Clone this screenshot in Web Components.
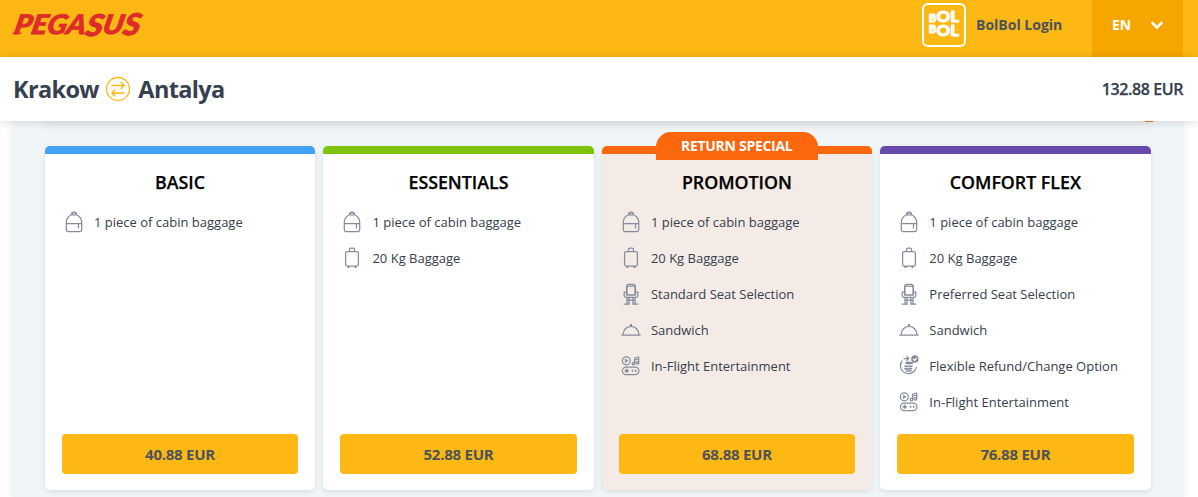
<!DOCTYPE html>
<html lang="en">
<head>
<meta charset="utf-8">
<title>Pegasus</title>
<style>
html,body{margin:0;height:497px;overflow:hidden;background:#fff}
body{font-family:"Open Sans","Noto Sans",sans-serif;color:#36404e}
</style>
</head>
<body>
<fare-page></fare-page>
<script>
class Base extends HTMLElement{
  constructor(){super();this.attachShadow({mode:'open'});}
  connectedCallback(){this.shadowRoot.innerHTML=this.render();}
}
const ICONS={
cabin:'<path d="M4.300 12.500C4.300 8.500 6.500 6.200 9.500 4.800H14.500C17.500 6.200 19.700 8.500 19.700 12.500V19.800Q19.700 21.500 18 21.500H6Q4.300 21.500 4.300 19.800Z M4.300 13.700H19.700M16.500 14V18.500"/><path d="M9.700 4.500Q9.800 2.400 12 2.400T14.300 4.500" stroke-width="1.800"/>',
bag:'<rect x="5.600" y="5.500" width="12.800" height="14.500" rx="1.500"/><path d="M9.500 5.500V3.300Q9.500 2 11 2H13Q14.500 2 14.500 3.300V5.500"/><path d="M7.500 21H9.500M14.500 21H16.500" stroke-width="1.800"/>',
seat:'<path d="M7.800 13V4.700Q8 2.600 9.500 2.500H14.500Q16 2.600 16.200 4.700V13Z" stroke-width="1.600"/><path d="M8 4.300H16" stroke-width="1"/><path d="M4.800 10.200H7M17 10.200H19.200M5.200 10V13.500Q5.300 15.300 7 15.300H17Q18.700 15.300 18.800 13.500V10M8 16V21.500M10 16V21.500M14 16V21.500M16 16V21.500M8 18H16M4.700 22H10.800M13.200 22H19.300"/>',
food:'<path d="M2.300 17.200H21.700M4.200 16.500C4.200 12 7.500 8.300 12 8.300S19.800 12 19.800 16.500"/><path d="M11 7H13" stroke-width="2"/>',
play:'<circle cx="7.300" cy="6.800" r="4"/><path d="M6.200 4.900V8.700L9.200 6.800Z" fill="currentColor" stroke-width=".5"/><path d="M15.700 9.500V4L19.700 3V8.500M15.700 6L19.700 5"/><circle cx="14.500" cy="9.600" r="1.300"/><circle cx="18.500" cy="8.800" r="1.300"/><rect x="3.400" y="13" width="16.500" height="7.700" rx="3.850"/><path d="M7.700 14.800V18.800M5.700 16.800H9.700" stroke-width="1.700"/><path d="M12.800 16.800H14.300M15.900 16.800H17.400" stroke-width="1.900"/>',
refund:'<path d="M5.500 6.700C4.100 8 3.400 9.700 3.400 11.700C3.400 16.200 7 19.700 11.500 19.700C15.500 19.700 18.800 16.800 19.400 13M6.500 4.500H11.500M9.500 2.300L11.700 4.500L9.500 6.700"/><path d="M8.500 9Q12 7.600 15.500 9Q12 10.400 8.500 9M7.500 12Q11.500 13 15.700 12M7.300 14.500Q11 15.500 15.300 14.500M9 16.800Q12 17.400 14.500 16.800" stroke-width="1.400"/><circle cx="17.900" cy="5" r="3.700" fill="currentColor" stroke="none"/><path class="tick" d="M16.200 5L17.600 6.400L19.900 3.800"/>'
};
customElements.define('fare-icon',class extends Base{
render(){return `<style>:host{display:block;width:24px;height:24px;color:#858d9c}svg{display:block}.tick{stroke:#fff}</style><svg width="24" height="24" viewBox="0 0 24 24" fill="none" stroke="currentColor" stroke-width="1.250" stroke-linejoin="round">${ICONS[this.getAttribute('name')]}</svg>`}});
customElements.define('fare-feature',class extends Base{
render(){return `<style>:host{display:flex;align-items:center;height:36px;font-size:13px;color:#36404e;white-space:nowrap}fare-icon{margin-right:8.200px}</style><fare-icon name="${this.getAttribute('icon')}"></fare-icon><span><slot></slot></span>`}});
customElements.define('fare-card',class extends Base{
render(){const tag=this.getAttribute('tag');return `<style>
:host{display:flex;flex-direction:column;position:relative;box-sizing:border-box;height:344px;border-radius:5px;border-top:8px solid ${this.getAttribute('tone')};background:${this.getAttribute('fill')||'#fff'};box-shadow:0 2px 5px rgba(60,80,100,.12);padding:0 17px 16px}
h2{margin:16px 0 9px;font-size:17.800px;line-height:25px;font-weight:600;-webkit-text-stroke:.25px #000;text-align:center;color:#000}
.list{flex:1}
button{height:40px;border:0;border-radius:4px;background:#fdb813;color:#4d525b;font:700 15px "Open Sans",sans-serif;letter-spacing:-.25px;padding:0}
.tag{position:absolute;top:-22px;left:54px;width:162px;height:28px;border-radius:15px 15px 0 0;background:#fb670c;color:#fff;font-size:14px;letter-spacing:-.3px;font-weight:700;line-height:28px;text-align:center}
</style>${tag?`<div class="tag">${tag}</div>`:''}<h2>${this.getAttribute('name')}</h2><div class="list"><slot></slot></div><button>${this.getAttribute('price')} EUR</button>`}});
customElements.define('site-header',class extends Base{
render(){return `<style>
:host{display:flex;height:57px;background:#fdb813;box-sizing:border-box;padding-right:15px}
.logo{margin:4px auto 0 10px}.bol{margin:3px 10px 0 0}svg{display:block;overflow:visible}
.login{font-size:14px;font-weight:700;line-height:50px;color:#4d525b;width:116px}
.lang{width:91px;background:#f7a600;color:#fff;font-size:14px;font-weight:700;line-height:50px;display:flex;box-sizing:border-box;padding-left:20px}
.lang svg{margin:21px 0 0 20px}
</style>
<svg class="logo" width="150" height="46" viewBox="0 0 150 46"><g transform="translate(3 30) skewX(-12)" fill="#e02b2b" stroke="#e02b2b" stroke-width=".8" font-family="Lato,sans-serif" font-weight="900" font-style="italic"><text x="0" y="0" font-size="27" textLength="126" lengthAdjust="spacingAndGlyphs">PEGA<tspan dy="1.500" font-size="30">S</tspan><tspan dy="-1.500">U</tspan><tspan dy=".8" font-size="30">S</tspan></text><path d="M-.5 -.8H8M18 -.8H24" fill="none" stroke-width="1.600"/></g></svg>
<svg class="bol" width="44" height="44" viewBox="0 0 44 44"><rect x="1" y="1" width="42" height="42" rx="5" fill="none" stroke="#fff" stroke-width="2"/><g fill="#fff" stroke="#fff" stroke-width="1" stroke-linejoin="round" font-family="Lato,sans-serif" font-weight="900"><text x="6.800" y="18.500" font-size="11">B</text><text x="14.500" y="18.500" font-size="15.500" textLength="22.500" lengthAdjust="spacingAndGlyphs">OL</text><text x="6.800" y="29.500" font-size="11">B</text><text x="14.500" y="32.800" font-size="15.500" textLength="22.500" lengthAdjust="spacingAndGlyphs">OL</text></g></svg>
<div class="login">BolBol Login</div><div class="lang">EN<svg width="12" height="9" viewBox="0 0 12 9"><path d="M1.500 2L6 6.500L10.500 2" fill="none" stroke="#fff" stroke-width="2.600" stroke-linecap="round"/></svg></div>`}});
customElements.define('route-bar',class extends Base{
render(){return `<style>
:host{display:flex;position:relative;z-index:2;align-items:center;height:64px;background:#fff;padding:0 15px 0 13px;box-shadow:0 1px 8px rgba(0,0,0,.14)}
.r{display:flex;align-items:center;font-size:23.500px;letter-spacing:-.65px;font-weight:700;flex:1}svg{margin:0 7px 0 6.500px}
.p{font-size:16px;letter-spacing:-.4px;font-weight:600;-webkit-text-stroke:.25px currentColor}
</style><div class="r"><span>Krakow</span><svg width="26" height="26" viewBox="0 0 26 26" fill="none" stroke="#fdb813" stroke-width="1.300"><circle cx="13" cy="13" r="11.500"/><path d="M6.500 9.500H19M15.700 6L19.200 9.500L15.700 13M19.500 17H7M10.300 13.500L6.800 17L10.300 20.500"/></svg><span>Antalya</span></div><div class="p">132.88 EUR</div>`}});
const F={c:['cabin','1 piece of cabin baggage'],b:['bag','20 Kg Baggage'],s:['seat','Standard Seat Selection'],p:['seat','Preferred Seat Selection'],w:['food','Sandwich'],r:['refund','Flexible Refund/Change Option'],e:['play','In-Flight Entertainment']};
const list=k=>[...k].map(x=>`<fare-feature icon="${F[x][0]}">${F[x][1]}</fare-feature>`).join('');
customElements.define('fare-page',class extends Base{
render(){return `<style>
:host{display:block;height:497px;overflow:hidden}
.panel{box-sizing:border-box;height:376px;margin:0 14px 0 12px;padding:0 33px;background:#f0f5f8;box-shadow:0 0 8px rgba(0,0,0,.08)}
.previous{box-sizing:border-box;height:1px;margin:0 -2px 24px -2px;background:#e5e8e9;box-shadow:0 2px 7px rgba(0,0,0,.3);display:flex;justify-content:flex-end}
.previous i{width:8px;height:1px;background:#e86a2b;position:relative;z-index:3}
.grid{display:grid;grid-template-columns:repeat(4,1fr);gap:8px;margin:0 .4px 0 -.2px}
</style><site-header></site-header><route-bar></route-bar><div class="panel"><div class="previous"><i></i></div><div class="grid">
<fare-card name="BASIC" price="40.88" tone="#42a1f3">${list('c')}</fare-card>
<fare-card name="ESSENTIALS" price="52.88" tone="#80c30d">${list('cb')}</fare-card>
<fare-card name="PROMOTION" price="68.88" tone="#fb670c" fill="#f4ebe6" tag="RETURN SPECIAL">${list('cbswe')}</fare-card>
<fare-card name="COMFORT FLEX" price="76.88" tone="#674aac">${list('cbpwre')}</fare-card>
</div></div>`}});
</script>
</body>
</html>
